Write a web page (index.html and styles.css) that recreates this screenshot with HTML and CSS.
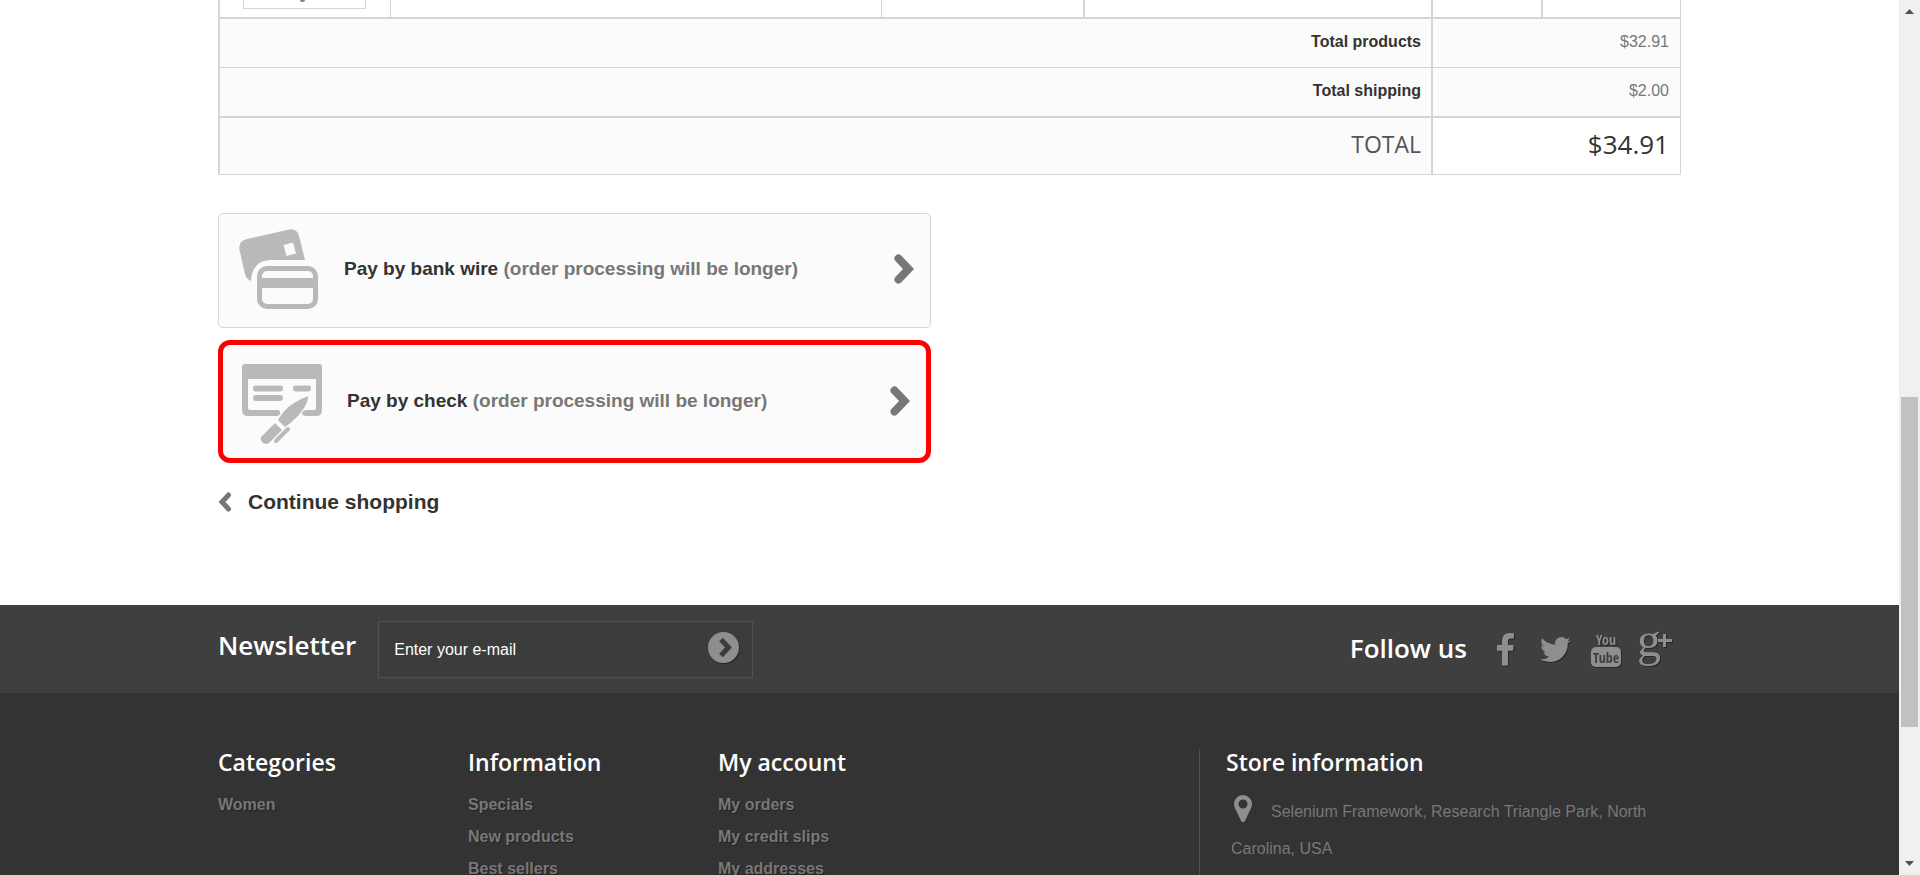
FILE: index.html
```html
<!DOCTYPE html>
<html lang="en">
<head>
<meta charset="utf-8">
<title>Order - Payment</title>
<link rel="stylesheet" href="styles.css">
</head>
<body>
<div class="page">
  <main class="container main">
    <table class="cart">
      <colgroup>
        <col class="col-image"><col class="col-desc"><col class="col-avail"><col class="col-price"><col class="col-qty"><col class="col-total">
      </colgroup>
      <tbody>
        <tr class="item">
          <td><div class="thumb"><span class="shoe"></span></div></td>
          <td></td>
          <td class="wide-rule"></td>
          <td class="wide-rule"></td>
          <td class="wide-rule"></td>
          <td></td>
        </tr>
      </tbody>
      <tfoot>
        <tr>
          <th class="wide-rule" colspan="4" scope="row">Total products</th>
          <td colspan="2">$32.91</td>
        </tr>
        <tr class="heavy">
          <th class="wide-rule" colspan="4" scope="row">Total shipping</th>
          <td colspan="2">$2.00</td>
        </tr>
        <tr class="grand">
          <th class="wide-rule" colspan="4" scope="row">TOTAL</th>
          <td colspan="2">$34.91</td>
        </tr>
      </tfoot>
    </table>

    <div class="payments">
      <a class="payment" href="#bankwire">
        <svg class="payment-icon" viewBox="0 0 80 80" aria-hidden="true">
          <path fill="#b9b9b9" fill-rule="evenodd" d="M8 10 50 0.500Q58-1 60 7L66 31H31Q13 32 12 52Q7 50 6 45L0.500 21Q-1 12 8 10ZM44.500 16 54 13.500 57 24.500 47.500 27Z"/>
          <rect x="20.500" y="39.500" width="56" height="38" rx="7.500" fill="none" stroke="#b9b9b9" stroke-width="5"/>
          <path fill="#b9b9b9" d="M20 49h57v10H20z"/>
        </svg>
        <span class="payment-text">Pay by bank wire <span>(order processing will be longer)</span></span>
        <svg class="chevron" viewBox="0 0 20 30" aria-hidden="true"><path d="M4.500 4.500 14.500 15 4.500 25.500"/></svg>
      </a>
      <a class="payment selected" href="#check">
        <svg class="payment-icon" viewBox="0 0 80 80" aria-hidden="true">
          <path fill="#b9b9b9" fill-rule="evenodd" d="M3 0H77Q80 0 80 3V46Q80 52 74 52H64Q60 52 60 49Q61 46 64 46H72Q74 46 74 44V15H6V44Q6 46 8 46H36Q39 47 38 50Q37 52 34 52H6Q0 52 0 46V3Q0 0 3 0Z"/>
          <path fill="none" stroke="#b9b9b9" stroke-width="6" stroke-linecap="round" d="M14 24.500H38M14 34H38M54 24.500H66"/>
          <path fill="#b9b9b9" d="M66 32Q66 38 62 44Q55 55 43 63L36 56Q42 45 52 39Q58 35 66 32ZM33 59 40 66 28 78Q24 82 20 78Q17 74 21 71Z"/>
          <path fill="none" stroke="#b9b9b9" stroke-width="4" stroke-linecap="round" d="M46 65 34 77"/>
        </svg>
        <span class="payment-text">Pay by check <span>(order processing will be longer)</span></span>
        <svg class="chevron" viewBox="0 0 20 30" aria-hidden="true"><path d="M4.500 4.500 14.500 15 4.500 25.500"/></svg>
      </a>
    </div>

    <a class="continue" href="#shop">
      <svg class="back" viewBox="0 0 14 20" aria-hidden="true"><path d="M10.500 3 4 10 10.500 17"/></svg>
      Continue shopping
    </a>
  </main>

  <footer class="footer">
    <div class="top-bar">
      <div class="container bar-row">
        <form class="newsletter">
          <label class="bar-title" for="email">Newsletter</label>
          <div class="field">
            <input id="email" type="text" value="Enter your e-mail">
            <button type="button" aria-label="Subscribe">
              <svg viewBox="0 0 34 34" aria-hidden="true">
                <circle cx="17.500" cy="17.500" r="15.500" fill="#262626"/>
                <circle cx="16.500" cy="16.500" r="15.500" fill="#8e8e8e"/>
                <path d="M14 8.500 21.500 16.500 14 24.500" fill="none" stroke="#3c3c3c" stroke-width="5"/>
              </svg>
            </button>
          </div>
        </form>
        <section class="social">
          <h2 class="bar-title">Follow us</h2>
          <a href="#facebook" aria-label="Facebook"><svg width="18" height="36" viewBox="479 -50 918 1836" aria-hidden="true"><path d="M1343 12v264h-157q-86 0-116 36t-30 108v189h293l-39 296h-254v759h-306v-759h-255v-296h255v-218q0-186 104-288.500t277-102.500q147 0 228 12z"/></svg></a>
          <a href="#twitter" aria-label="Twitter"><svg width="32" height="36" viewBox="108 0 1632 1836" aria-hidden="true"><path d="M1684 408q-67 98-162 167 1 14 1 42 0 130-38 259.500t-115.500 248.500-184.500 210.500-258 146-323 54.500q-271 0-496-145 35 4 78 4 225 0 401-138-105-2-188-64.500t-114-159.500q33 5 61 5 43 0 85-11-112-23-185.500-111.500t-73.500-205.500v-4q68 38 146 41-66-44-105-115t-39-154q0-88 44-163 121 149 294.500 238.500t371.500 99.500q-8-38-8-74 0-134 94.500-228.500t228.500-94.500q140 0 236 102 109-21 205-78-37 115-142 178 93-10 186-50z"/></svg></a>
          <a href="#youtube" aria-label="YouTube"><svg width="31" height="36" viewBox="0 0 31 36" aria-hidden="true">
            <text class="yt" x="15" y="13" text-anchor="middle">You</text>
            <rect x="0" y="15" width="30" height="20" rx="5"/>
            <text class="yt cut" x="15" y="31" text-anchor="middle">Tube</text>
          </svg></a>
          <a href="#google" aria-label="Google Plus"><svg width="35" height="36" viewBox="0 0 35 36" aria-hidden="true">
            <text class="gp" x="-1" y="24">g</text>
            <path d="M25 2h3v5h6v3h-6v5h-3v-5h-5V7h5z"/>
          </svg></a>
        </section>
      </div>
    </div>
    <div class="container columns">
      <section>
        <h2>Categories</h2>
        <ul><li><a href="#women">Women</a></li></ul>
      </section>
      <section>
        <h2>Information</h2>
        <ul>
          <li><a href="#specials">Specials</a></li>
          <li><a href="#new">New products</a></li>
          <li><a href="#best">Best sellers</a></li>
        </ul>
      </section>
      <section>
        <h2>My account</h2>
        <ul>
          <li><a href="#orders">My orders</a></li>
          <li><a href="#slips">My credit slips</a></li>
          <li><a href="#addresses">My addresses</a></li>
        </ul>
      </section>
      <section class="store">
        <h2>Store information</h2>
        <p><svg class="pin" viewBox="384 128 1024 1536" aria-hidden="true"><path d="M1152 640q0-106-75-181t-181-75-181 75-75 181 75 181 181 75 181-75 75-181zm256 0q0 109-33 179l-364 774q-16 33-47.500 52t-67.500 19-67.500-19-46.500-52l-365-774q-33-70-33-179 0-212 150-362t362-150 362 150 150 362z"/></svg>Selenium Framework, Research Triangle Park, North Carolina, USA</p>
      </section>
    </div>
  </footer>
</div>
<div class="scrollbar" aria-hidden="true">
  <svg viewBox="0 0 9 5"><path d="M0 5 4.500 0 9 5z"/></svg>
  <div class="track"><div class="thumb-bar"></div></div>
  <svg viewBox="0 0 9 5"><path d="M0 0 4.500 5 9 0z"/></svg>
</div>
</body>
</html>
```
FILE: styles.css
```css
* { box-sizing: border-box; }

body {
  margin: 0;
  display: flex;
  height: 100vh;
  overflow: hidden;
  background: #fff;
  color: #777;
  font: 16px/24px "Liberation Sans", Arial, sans-serif;
}

a { color: inherit; text-decoration: none; }
h2, p, ul { margin: 0; padding: 0; }
ul { list-style: none; }

.page {
  flex: 1;
  min-width: 0;
  display: flex;
  flex-direction: column;
  overflow: hidden;
}

.container { width: 100%; max-width: 1463px; margin: 0 auto; }
.main { flex: none; padding-bottom: 86px; }

/* Cart summary */
.cart {
  width: 100%;
  table-layout: fixed;
  border-collapse: separate;
  border-spacing: 0;
  border-left: 2px solid #d6d4d4;
}
.col-image { width: 171px; }
.col-desc { width: 491px; }
.col-avail { width: 203px; }
.col-price { width: 348px; }
.col-qty { width: 110px; }

.cart th, .cart td {
  padding: 11px 11px 13px;
  text-align: right;
  vertical-align: top;
  border: 0 solid #d6d4d4;
  border-width: 0 1px 1px 0;
}
.cart .wide-rule { border-right-width: 2px; }
.cart .item td { padding: 0 24px 8px 23px; border-bottom-width: 2px; }
.thumb {
  display: flex;
  justify-content: center;
  height: 9px;
  border: 1px solid #d6d4d4;
  border-top: 0;
}
.shoe { width: 5px; height: 2px; margin-right: 5px; border-radius: 0 0 2px 2px; background: #8d8079; }
.cart tfoot th { padding-right: 10px; color: #333; }
.cart tfoot th, .cart tfoot td { background: #fbfbfb; }
.cart .heavy th, .cart .heavy td { border-bottom-width: 2px; }
.cart .grand th, .cart .grand td {
  padding-top: 11px;
  padding-bottom: 15px;
  font-family: "Open Sans", sans-serif;
  line-height: 30px;
  vertical-align: middle;
}
.cart .grand th { font-size: 23px; font-weight: 400; color: #555; }
.cart .grand td { font-size: 26px; color: #333; background: #fff; }

/* Payment choices */
.payments {
  display: grid;
  gap: 12px;
  width: calc(50% - 19px);
  margin-top: 38px;
}
.payment {
  display: flex;
  align-items: center;
  padding: 15px 16px 18px 20px;
  border: 1px solid #d6d4d4;
  border-radius: 5px;
  background: #fbfbfb;
  color: #333;
  font-size: 19px;
  font-weight: 700;
}
.payment.selected { border: 5px solid #f00; border-radius: 12px; padding: 19px 16px 14px 19px; }
.selected .payment-text, .selected .chevron { margin-bottom: 6px; }
.payment-icon { flex: none; width: 80px; height: 80px; margin-right: 25px; }
.payment-text { flex: 1; }
.payment-text span { color: #777; }
.chevron { width: 20px; height: 30px; }
.chevron path, .back path { fill: none; stroke: #777; stroke-linecap: round; }
.chevron path { stroke-width: 8; }

.continue {
  display: inline-flex;
  align-items: center;
  gap: 16px;
  margin-top: 27px;
  color: #333;
  font-size: 21px;
  font-weight: 700;
}
.back { width: 14px; height: 20px; }
.back path { stroke-width: 5; }

/* Footer */
.footer { flex: 1; background: #333; }
.top-bar { background: #3f3f3f; }
.bar-row {
  display: flex;
  justify-content: space-between;
  align-items: center;
  padding: 16px 8px 15px 0;
}
.bar-title {
  color: #fff;
  font: 600 26px/30px "Open Sans", sans-serif;
}
.newsletter { display: flex; gap: 22px; }
.newsletter .bar-title { padding-top: 9px; }
.field {
  display: flex;
  align-items: center;
  width: 375px;
  height: 57px;
  padding: 0 11px 4px 15px;
  border: 1px solid #515151;
  background: #3c3c3c;
}
.field input {
  flex: 1;
  min-width: 0;
  padding: 4px 0 0;
  border: 0;
  background: none;
  color: #fff;
  font: 16px/24px "Liberation Sans", Arial, sans-serif;
}
.field button { padding: 0; border: 0; background: none; line-height: 0; }
.field button svg { width: 34px; height: 34px; }

.social { display: flex; align-items: center; }
.social .bar-title { margin-right: 30px; padding-bottom: 4px; }
.social a { display: flex; margin-right: 19px; }
.social a:first-of-type { margin-right: 25px; }
.social a:nth-of-type(3) { margin-right: 16px; }
.social a:last-of-type { margin-right: 0; }
.social svg { overflow: visible; fill: #8e8e8e; filter: drop-shadow(1px 1px 0 #262626); }
.yt { font: 700 14px "Liberation Sans Narrow", "Open Sans Condensed", "DejaVu Sans Condensed", sans-serif; }
.yt.cut { fill: #3f3f3f; }
.gp { font: 48px "Liberation Serif", serif; }

.columns {
  display: grid;
  grid-template-columns: 250fr 250fr 481fr 482fr;
  padding-top: 56px;
  text-shadow: 1px 1px 0 #222;
}
.columns h2 {
  margin-bottom: 18px;
  color: #fff;
  font: 600 23px/26px "Open Sans", sans-serif;
  text-shadow: none;
}
.columns li { padding-bottom: 8px; font-weight: 700; }
.store { min-height: 200px; padding-left: 26px; border-left: 1px solid #515151; }
.store p { padding-left: 5px; line-height: 37px; text-shadow: none; }
.pin { width: 18px; height: 27px; margin: 0 19px 0 3px; fill: #8e8e8e; vertical-align: -5px; }

/* Window scrollbar */
.scrollbar {
  flex: none;
  display: flex;
  flex-direction: column;
  align-items: center;
  width: 21px;
  padding: 9px 2px;
  background: #f0f0f0;
}
.scrollbar svg { width: 9px; height: 5px; fill: #505050; }
.track { flex: 1; width: 100%; display: flex; flex-direction: column; padding: 7px 0; }
.track::before { content: ""; flex: 376; }
.track::after { content: ""; flex: 127; }
.thumb-bar { flex: 330; background: #c1c1c1; }
```
